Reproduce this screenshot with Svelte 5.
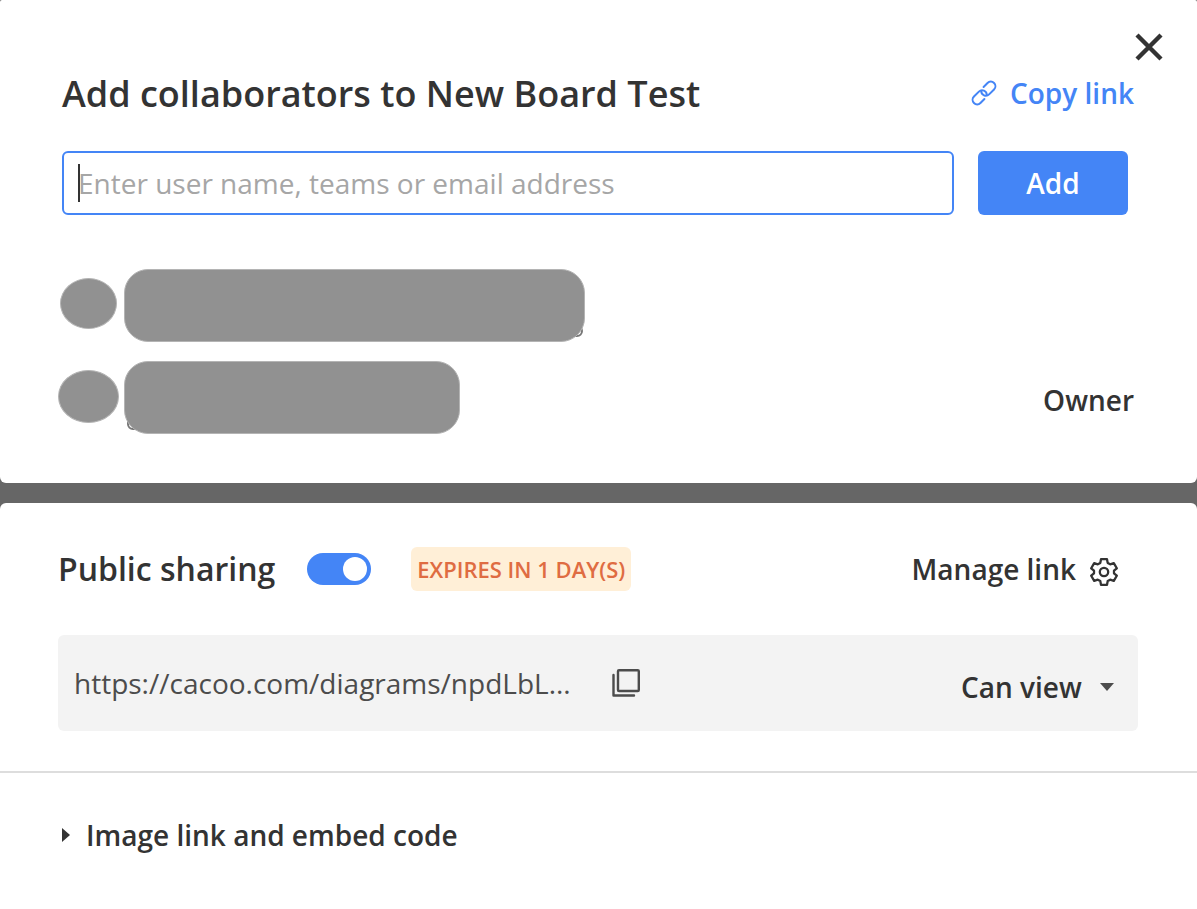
<script lang="ts">
	interface Collaborator {
		id: number;
		avatar: { width: number; height: number };
		nameWidth: number;
		trace: 'start' | 'end';
		role?: string;
	}

	const collaborators: Collaborator[] = [
		{ id: 1, avatar: { width: 57, height: 51 }, nameWidth: 461, trace: 'end' },
		{ id: 2, avatar: { width: 61, height: 53 }, nameWidth: 336, trace: 'start', role: 'Owner' }
	];

	let query = $state('');
	let isPublic = $state(true);
	let permission = $state('view');
</script>

<div class="page">
	<section class="card collaborators">
		<div class="close-row">
			<button class="plain" type="button" aria-label="Close">
				<svg class="icon" width="30" height="30" viewBox="0 0 30 30">
					<path d="M3 3l24 24M27 3L3 27" fill="none" stroke="currentColor" stroke-width="4.4" />
				</svg>
			</button>
		</div>

		<header class="title-row">
			<h1>Add collaborators to New Board Test</h1>
			<a class="copy-link" href="#copy">
				<svg class="icon" width="26" height="26" viewBox="-13 -13 26 26" fill="none" stroke="currentColor" stroke-width="2" stroke-linecap="round">
					<g transform="rotate(-45)">
						<path d="M4 -4.6H9.6a4.6 4.6 0 0 1 0 9.2H2.6A4.6 4.6 0 0 1 -.6 -3.3" />
						<path d="M-4 4.6H-9.6a4.6 4.6 0 0 1 0 -9.2H-2.6A4.6 4.6 0 0 1 .6 3.3" />
					</g>
				</svg>
				Copy link
			</a>
		</header>

		<form class="add-form" onsubmit={(e) => e.preventDefault()}>
			<div class="field">
				<input
					type="text"
					aria-label="Collaborator"
					placeholder="Enter user name, teams or email address"
					bind:value={query}
				/>
				{#if !query}
					<span class="caret"></span>
				{/if}
			</div>
			<button class="add" type="submit">Add</button>
		</form>

		<ul class="people">
			{#each collaborators as person (person.id)}
				<li>
					<span class="avatar-cell">
						<span
							class="avatar"
							style:width={`${person.avatar.width}px`}
							style:height={`${person.avatar.height}px`}
						></span>
					</span>
					<span class="name {person.trace}" style:width={`${person.nameWidth}px`}></span>
					{#if person.role}
						<span class="role">{person.role}</span>
					{/if}
				</li>
			{/each}
		</ul>
	</section>

	<section class="card sharing">
		<div class="sharing-body">
			<div class="sharing-row">
				<label class="public">
					Public sharing
					<input class="toggle" type="checkbox" bind:checked={isPublic} />
				</label>
				<span class="badge">EXPIRES IN 1 DAY(S)</span>
				<button class="plain manage" type="button">
					Manage link
					<svg class="icon" width="28" height="28" viewBox="0 0 28 28" fill="none" stroke="currentColor" stroke-width="2.3" stroke-linejoin="round">
						<path d="M11 1.2h6l.7 3.7 2.5 1.4 3.6-1.2 3 5.2-2.8 2.4v2.6l2.8 2.4-3 5.2-3.6-1.2-2.5 1.4-.7 3.7h-6l-.7-3.7-2.5-1.4-3.6 1.2-3-5.2L4 15.3v-2.6L1.2 10.3l3-5.2 3.6 1.2 2.5-1.4z" />
						<circle cx="14" cy="14" r="4.2" />
					</svg>
				</button>
			</div>

			<div class="link-box">
				<a class="url" href="#diagram">https://cacoo.com/diagrams/npdLbL...</a>
				<button class="plain" type="button" aria-label="Copy URL">
					<svg class="icon" width="28" height="28" viewBox="0 0 28 28" fill="none" stroke="#4c4c4c" stroke-width="2.4" stroke-linejoin="round" stroke-linecap="round">
						<rect x="6" y="1.2" width="20.8" height="20.8" rx="1" />
						<path d="M1.5 6v20.5h20.5" />
					</svg>
				</button>
				<div class="permission">
					<select aria-label="Permission" bind:value={permission}>
						<option value="view">Can view</option>
						<option value="edit">Can edit</option>
					</select>
					<svg class="arrow" width="14" height="8" viewBox="0 0 14 8">
						<path d="M0 0h14L7 8z" fill="#4c4c4c" />
					</svg>
				</div>
			</div>
		</div>

		<details class="embed">
			<summary>
				<svg class="icon" width="8" height="14" viewBox="0 0 8 14">
					<path d="M0 0l8 7-8 7z" fill="currentColor" />
				</svg>
				Image link and embed code
			</summary>
		</details>
	</section>
</div>

<style>
	:global(body) {
		margin: 0;
		background: #666;
	}

	.page {
		display: flex;
		flex-direction: column;
		gap: 20px;
		min-height: 100vh;
		color: #333;
		font-family: "Open Sans", "Noto Sans", sans-serif;
		font-size: 28px;
		font-weight: 600;
		line-height: 40px;
	}

	.page * {
		box-sizing: border-box;
	}

	.card {
		background: #fff;
	}

	button,
	input,
	select {
		margin: 0;
		font: inherit;
		color: inherit;
	}

	.plain {
		padding: 0;
		border: 0;
		background: none;
		cursor: pointer;
	}

	.icon {
		display: block;
		flex: none;
	}

	.collaborators {
		padding: 32px 63px 49px 62px;
		border-radius: 2px 2px 6px 6px;
	}

	.close-row {
		display: flex;
		justify-content: flex-end;
		margin-right: -30px;
	}

	.title-row {
		display: flex;
		align-items: center;
		justify-content: space-between;
		margin-top: 8px;
	}

	h1 {
		margin: 0;
		font-size: 36px;
		font-weight: 600;
		line-height: 48px;
	}

	.copy-link {
		display: flex;
		align-items: center;
		gap: 13px;
		padding-bottom: 2px;
		color: #4485f6;
		text-decoration: none;
	}

	.add-form {
		display: flex;
		gap: 24px;
		margin: 33px 6px 0 0;
	}

	.field {
		position: relative;
		flex: 1;
	}

	.field input {
		display: block;
		width: 100%;
		height: 64px;
		padding: 0 14px;
		border: 2px solid #4485f6;
		border-radius: 6px;
		background: #fff;
		font-weight: 400;
		outline: none;
	}

	.field input::placeholder {
		color: #a6a6a6;
		opacity: 1;
	}

	.caret {
		position: absolute;
		top: 13px;
		left: 16px;
		width: 2px;
		height: 38px;
		background: #333;
		pointer-events: none;
	}

	.add {
		width: 150px;
		height: 64px;
		padding: 0;
		border: 0;
		border-radius: 6px;
		background: #4485f6;
		color: #fff;
		cursor: pointer;
	}

	.people {
		display: grid;
		gap: 19px;
		margin: 54px 0 0 -4px;
		padding: 0;
		list-style: none;
	}

	.people li {
		display: flex;
		align-items: flex-start;
		gap: 5px;
		isolation: isolate;
	}

	.avatar-cell {
		display: flex;
		justify-content: center;
		width: 61px;
		padding-top: 9px;
	}

	.avatar,
	.name {
		background: #919191;
		border: 1px solid #b4b4b4;
	}

	.avatar {
		border-radius: 50%;
	}

	.name {
		position: relative;
		height: 73px;
		border-radius: 24px;
	}

	/* edge of the covered name that shows past the rounded corner */
	.name::before {
		content: "";
		position: absolute;
		z-index: -1;
		border: 2px solid #777;
		border-radius: 6px;
	}

	.name.start::before {
		bottom: 3px;
		left: 2px;
		width: 12px;
		height: 18px;
	}

	.name.end::before {
		right: 1px;
		bottom: 4px;
		width: 12px;
		height: 8px;
	}

	.role {
		align-self: center;
		margin-left: auto;
		padding-top: 4px;
	}

	.sharing {
		flex: 1;
		border-radius: 6px 6px 0 0;
	}

	.sharing-body {
		padding: 44px 59px 40px 58px;
		border-bottom: 2px solid #ddd;
	}

	.sharing-row {
		display: flex;
		align-items: center;
		gap: 40px;
		padding-right: 20px;
	}

	.public {
		display: flex;
		align-items: center;
		gap: 32px;
		font-size: 32px;
		line-height: 44px;
	}

	.toggle {
		appearance: none;
		width: 64px;
		height: 32px;
		padding: 4px;
		border-radius: 16px;
		background: #b3b3b3;
		cursor: pointer;
	}

	.toggle::before {
		content: "";
		display: block;
		width: 24px;
		height: 24px;
		border-radius: 50%;
		background: #fff;
	}

	.toggle:checked {
		background: #4485f6;
	}

	.toggle:checked::before {
		margin-left: auto;
	}

	.badge {
		padding: 0 6px;
		border-radius: 6px;
		background: #ffefd7;
		color: #df6c42;
		font-size: 22px;
		line-height: 44px;
	}

	.manage {
		display: flex;
		align-items: center;
		gap: 14px;
		margin-left: auto;
	}

	.manage .icon {
		margin-top: 6px;
	}

	.link-box {
		display: flex;
		align-items: center;
		gap: 41px;
		height: 96px;
		margin-top: 44px;
		padding: 0 24px 0 16px;
		border-radius: 6px;
		background: #f3f3f3;
	}

	.url {
		color: #4c4c4c;
		font-weight: 400;
		text-decoration: none;
	}

	.permission {
		position: relative;
		display: flex;
		align-items: center;
		margin-left: auto;
		padding-top: 8px;
	}

	.permission select {
		appearance: none;
		padding: 0 32px 0 0;
		border: 0;
		background: none;
		cursor: pointer;
	}

	.arrow {
		position: absolute;
		right: 0;
		pointer-events: none;
	}

	.embed {
		padding: 42px 62px;
	}

	summary {
		display: flex;
		align-items: center;
		gap: 16px;
		list-style: none;
		cursor: pointer;
	}
</style>
